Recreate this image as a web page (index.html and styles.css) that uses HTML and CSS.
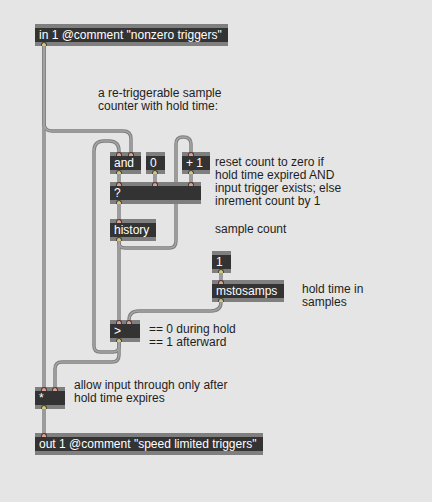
FILE: index.html
```html
<!DOCTYPE html>
<html lang="en">
<head>
   <title>gen~ sample counter</title>
   <link rel="stylesheet" href="styles.css">
</head>
<body>
   <div class="patcher">
      <!-- Patch cords: drawn twice, dark edge under a lighter core -->
      <svg class="cords" width="432" height="502">
         <defs>
            <g id="wires">
               <path d="M44,46 L44,387" />
               <path d="M44,46 L44,123 Q44,131 52,131 L123,131 Q131,131 131,139 L131,152" />
               <path d="M119,342 L119,346 Q119,352 113,352 L100,352 Q94,352 94,346 L94,151 Q94,141 104,141 L109,141 Q119,141 119,151 L119,152" />
               <path d="M119,174 L119,182" />
               <path d="M155,174 L155,182" />
               <path d="M191,174 L191,182" />
               <path d="M119,204 L119,219" />
               <path d="M119,241 L119,320" />
               <path d="M119,241 L119,243 Q119,248 125,248 L169,248 Q176,248 176,241 L176,144 Q176,137 183,137 Q191,137 191,144 L191,152" />
               <path d="M221,273 L221,280" />
               <path d="M221,302 Q221,311 211,311 L139,311 Q129,311 129,320" />
               <path d="M119,342 L119,355 Q119,362 112,362 L62,362 Q55,362 55,369 L55,387" />
               <path d="M44,409 L44,433" />
            </g>
         </defs>
         <use href="#wires" class="cord-edge" />
         <use href="#wires" class="cord-core" />
      </svg>

      <!-- Objects -->
      <div class="obj o-in">
         in 1 @comment "nonzero triggers"
         <span class="outlet p1"></span>
      </div>

      <div class="obj o-and">
         <span class="inlet p1"></span>
         <span class="inlet p-and"></span>and
         <span class="outlet p1"></span>
      </div>

      <div class="obj o-zero">
         0
         <span class="outlet p1"></span>
      </div>

      <div class="obj o-plus">
         <span class="inlet p1"></span>+ 1
         <span class="outlet p1"></span>
      </div>

      <div class="obj o-switch">
         <span class="inlet p1"></span>
         <span class="inlet p-mid"></span>
         <span class="inlet p-right"></span>?
         <span class="outlet p1"></span>
      </div>

      <div class="obj o-history">
         <span class="inlet p1"></span>history
         <span class="outlet p1"></span>
      </div>

      <div class="obj o-one">
         1
         <span class="outlet p1"></span>
      </div>

      <div class="obj o-ms">
         <span class="inlet p1"></span>mstosamps
         <span class="outlet p1"></span>
      </div>

      <div class="obj o-gt">
         <span class="inlet p1"></span>
         <span class="inlet p-gt"></span>&gt;
         <span class="outlet p1"></span>
      </div>

      <div class="obj o-mul">
         <span class="inlet p1"></span>
         <span class="inlet p-mul"></span>*
         <span class="outlet p1"></span>
      </div>

      <div class="obj o-out">
         <span class="inlet p1"></span>out 1 @comment "speed limited triggers"
      </div>

      <!-- Comments -->
      <div class="comment c-title">a re-triggerable sample<br>counter with hold time:</div>
      <div class="comment c-reset">reset count to zero if<br>hold time expired AND<br>input trigger exists; else<br>inrement count by 1</div>
      <div class="comment c-count">sample count</div>
      <div class="comment c-hold">hold time in<br>samples</div>
      <div class="comment c-gt">== 0 during hold<br>== 1 afterward</div>
      <div class="comment c-allow">allow input through only after<br>hold time expires</div>
   </div>
</body>
</html>
```

FILE: styles.css
```css
* {
   margin: 0;
   padding: 0;
   box-sizing: border-box;
}

body {
   background: #e5e5e5;
   font-family: 'Liberation Sans', Arial, sans-serif;
   width: 432px;
   height: 502px;
   overflow: hidden;
}

/* Free canvas for the patch */
.patcher {
   position: relative;
   width: 432px;
   height: 502px;
}

.cords {
   position: absolute;
   top: 0;
   left: 0;
}

.cords path {
   fill: none;
   stroke-linecap: round;
}

.cord-edge {
   stroke: #7c7c7c;
   stroke-width: 3.4;
}

.cord-core {
   stroke: #a4a4a4;
   stroke-width: 1.6;
}

/* gen~ object boxes */
.obj {
   position: absolute;
   height: 22px;
   background: #333333;
   border-top: 4px solid #7f7f7f;
   border-bottom: 4px solid #7f7f7f;
   color: #ffffff;
   font-size: 12px;
   line-height: 14px;
   padding: 0 4px;
   white-space: nowrap;
}

.o-in      { left: 35px;  top: 24px;  width: 193px; }
.o-and     { left: 110px; top: 152px; width: 31px; }
.o-zero    { left: 146px; top: 152px; width: 19px; }
.o-plus    { left: 182px; top: 152px; width: 28px; }
.o-switch  { left: 110px; top: 182px; width: 91px; }
.o-history { left: 110px; top: 219px; width: 46px; }
.o-one     { left: 212px; top: 251px; width: 19px; }
.o-ms      { left: 212px; top: 280px; width: 72px; }
.o-gt      { left: 110px; top: 320px; width: 30px; }
.o-mul     { left: 35px;  top: 387px; width: 30px; }
.o-out     { left: 35px;  top: 433px; width: 228px; }

/* Inlets and outlets */
.inlet,
.outlet {
   position: absolute;
   width: 6px;
   height: 4px;
   border: 1px solid #4a3a36;
   border-bottom: none;
   border-radius: 3px 3px 0 0;
}

.inlet {
   top: -4px;
   background: #e0a092;
}

.outlet {
   bottom: -4px;
   background: #cfc77a;
   border-color: #4a4630;
}

.p1      { left: 6px; }
.p-and   { left: 18px; }
.p-mid   { left: 42px; }
.p-right { left: 78px; }
.p-gt    { left: 16px; }
.p-mul   { left: 17px; }

/* Comments */
.comment {
   position: absolute;
   color: #1e1e1e;
   font-size: 12px;
   line-height: 13px;
   white-space: nowrap;
}

.c-title { left: 98px;  top: 87px; }
.c-reset { left: 215px; top: 156px; }
.c-count { left: 215px; top: 223px; }
.c-hold  { left: 302px; top: 283px; }
.c-gt    { left: 149px; top: 323px; }
.c-allow { left: 74px;  top: 379px; }
```
